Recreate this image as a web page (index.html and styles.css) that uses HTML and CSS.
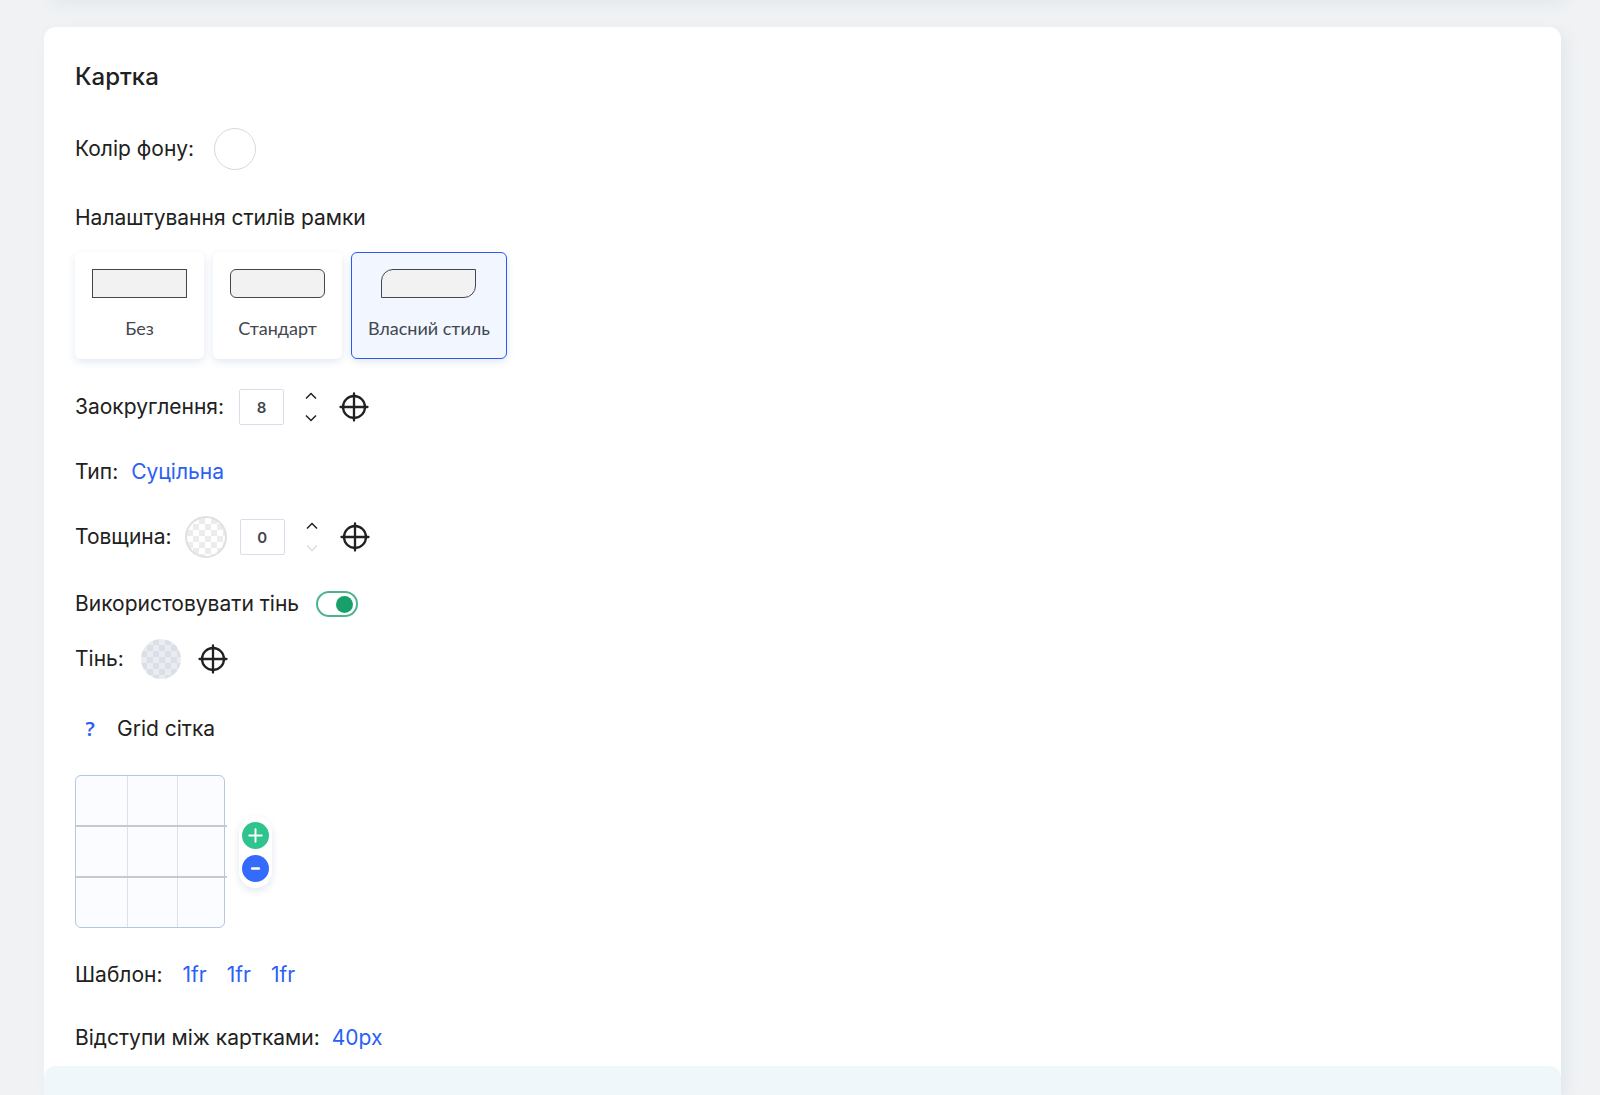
FILE: index.html
```html
<!DOCTYPE html>
<html lang="uk">
<head>
<meta charset="UTF-8">
<meta name="viewport" content="width=device-width, initial-scale=1.0">
<title>Картка</title>
<link rel="stylesheet" href="styles.css">
</head>
<body>

<svg class="sprite" aria-hidden="true">
    <symbol id="target" viewBox="0 0 30 30">
        <circle cx="15" cy="15" r="11" fill="none" stroke="currentColor" stroke-width="2.300"/>
        <path d="M15 1.500v27M1.500 15h27" fill="none" stroke="currentColor" stroke-width="2.300" stroke-linecap="round"/>
    </symbol>
    <symbol id="up" viewBox="0 0 12 8">
        <path d="M1 6.500 6 1.500l5 5" fill="none" stroke="currentColor" stroke-width="1.500"/>
    </symbol>
    <symbol id="down" viewBox="0 0 12 8">
        <path d="M1 1.500l5 5 5-5" fill="none" stroke="currentColor" stroke-width="1.500"/>
    </symbol>
</svg>

<main class="page">
    <div class="panel panel-prev"></div>

    <section class="panel">
        <form class="settings">
            <h1>Картка</h1>

            <div class="row row-bg">
                <label for="bgColor">Колір фону:</label>
                <button type="button" id="bgColor" class="swatch"></button>
            </div>

            <fieldset class="borders">
                <legend>Налаштування стилів рамки</legend>
                <div class="options">
                    <label class="option">
                        <input type="radio" name="border" value="none">
                        <span class="shape"></span>
                        <span>Без</span>
                    </label>
                    <label class="option">
                        <input type="radio" name="border" value="standard">
                        <span class="shape shape-round"></span>
                        <span>Стандарт</span>
                    </label>
                    <label class="option">
                        <input type="radio" name="border" value="custom" checked>
                        <span class="shape shape-custom"></span>
                        <span>Власний стиль</span>
                    </label>
                </div>
            </fieldset>

            <div class="row row-radius">
                <label for="radius">Заокруглення:</label>
                <div class="stepper">
                    <input type="text" id="radius" value="8">
                    <div class="arrows">
                        <button type="button" aria-label="Більше"><svg><use href="#up"/></svg></button>
                        <button type="button" aria-label="Менше"><svg><use href="#down"/></svg></button>
                    </div>
                    <button type="button" class="target" aria-label="Кути"><svg><use href="#target"/></svg></button>
                </div>
            </div>

            <div class="row row-type">
                <label for="borderType">Тип:</label>
                <button type="button" id="borderType" class="value">Суцільна</button>
            </div>

            <div class="row row-width">
                <label for="borderWidth">Товщина:</label>
                <button type="button" class="swatch swatch-empty" aria-label="Колір рамки"></button>
                <div class="stepper">
                    <input type="text" id="borderWidth" value="0">
                    <div class="arrows">
                        <button type="button" aria-label="Більше"><svg><use href="#up"/></svg></button>
                        <button type="button" aria-label="Менше" disabled><svg><use href="#down"/></svg></button>
                    </div>
                    <button type="button" class="target" aria-label="Сторони"><svg><use href="#target"/></svg></button>
                </div>
            </div>

            <div class="row row-toggle">
                <label for="useShadow">Використовувати тінь</label>
                <input type="checkbox" id="useShadow" class="toggle" checked>
            </div>

            <div class="row row-shadow">
                <label for="shadowColor">Тінь:</label>
                <button type="button" id="shadowColor" class="swatch swatch-shadow"></button>
                <button type="button" class="target" aria-label="Зміщення тіні"><svg><use href="#target"/></svg></button>
            </div>

            <div class="row row-grid">
                <button type="button" class="help" aria-label="Довідка">?</button>
                <span>Grid сітка</span>
            </div>

            <div class="grid-editor">
                <div class="grid-preview">
                    <div class="line"></div>
                    <div class="line"></div>
                    <div class="line"></div>
                </div>
                <div class="grid-buttons">
                    <button type="button" class="add" aria-label="Додати">
                        <svg viewBox="0 0 28 28"><path d="M14 7.500v13M7.500 14h13" stroke="#fff" stroke-width="2" stroke-linecap="round"/></svg>
                    </button>
                    <button type="button" class="remove" aria-label="Прибрати">
                        <svg viewBox="0 0 28 28"><path d="M10.500 14h7" stroke="#fff" stroke-width="2.500" stroke-linecap="round"/></svg>
                    </button>
                </div>
            </div>

            <div class="row row-template">
                <span>Шаблон:</span>
                <button type="button" class="value">1fr</button>
                <button type="button" class="value">1fr</button>
                <button type="button" class="value">1fr</button>
            </div>

            <div class="row row-gap">
                <label for="cardGap">Відступи між картками:</label>
                <button type="button" id="cardGap" class="value">40px</button>
            </div>
        </form>
        <div class="panel-next"></div>
    </section>
</main>

</body>
</html>
```
FILE: styles.css
```css
* {
    box-sizing: border-box;
}

body {
    margin: 0;
    background-color: #f0f2f4;
    color: #212121;
    font-family: Inter, Arial, sans-serif;
    font-size: 21px;
    line-height: 28px;
}

button {
    padding: 0;
    border: none;
    background: none;
    color: inherit;
    font: inherit;
    cursor: pointer;
}

svg {
    display: block;
    width: 100%;
    height: 100%;
}

.sprite {
    display: none;
}

.page {
    display: flex;
    flex-direction: column;
    gap: 27px;
    min-height: 100vh;
    padding: 0 39px 0 44px;
    overflow: hidden;
}

.panel {
    display: flex;
    flex-direction: column;
    flex: 1;
    border-radius: 12px;
    background-color: #fff;
    box-shadow: 6px 5px 14px #e3e9ed;
}

/* bottom edge of the panel above */
.panel-prev {
    flex: none;
    height: 40px;
    margin-top: -40px;
}

.panel-next {
    flex: 1;
    min-height: 29px;
    border-radius: 12px 12px 0 0;
    background-color: #eff7fb;
}

.settings {
    padding: 36px 31px 14px;
}

h1 {
    margin: 0;
    font-size: 24px;
    font-weight: 500;
    line-height: 28px;
}

.row {
    display: flex;
    align-items: center;
    margin-top: 33px;
}

.row-bg {
    gap: 20px;
    margin-top: 37px;
}

.swatch {
    width: 42px;
    height: 42px;
    border: 1px solid #d9d9d9;
    border-radius: 50%;
    background-color: #fff;
}

.swatch-empty {
    border: 2px solid #e0e0e0;
    background: repeating-conic-gradient(#fff 0 25%, #ececec 0 50%) 0 0 / 12px 12px;
}

.swatch-shadow {
    width: 40px;
    height: 40px;
    border: none;
    background: repeating-conic-gradient(#e9ecf2 0 25%, #dce0e6 0 50%) 0 0 / 12px 12px;
}

.borders {
    margin: 34px 0 0;
    padding: 0;
    border: none;
}

.borders legend {
    padding: 0;
}

.options {
    display: flex;
    flex-wrap: wrap;
    gap: 9px;
    margin-top: 20px;
}

.option {
    display: flex;
    flex-direction: column;
    align-items: center;
    gap: 16px;
    min-width: 129px;
    height: 107px;
    padding: 16px;
    border: 1px solid transparent;
    border-radius: 6px;
    box-shadow: 0 3px 8px #e2e9f1;
    color: #43474f;
    font-family: Lato, sans-serif;
    font-size: 18px;
    cursor: pointer;
}

.option input {
    position: absolute;
    opacity: 0;
}

.option:has(input:checked) {
    border-color: #2b59f6;
    background-color: #f1f6ff;
}

.shape {
    width: 95px;
    height: 31px;
    border: 1px solid #43474f;
    background-color: #f2f2f2;
}

.shape-round {
    border-radius: 6px;
}

.shape-custom {
    border-radius: 12px 0;
}

.row-radius {
    gap: 15px;
    margin-top: 30px;
}

.stepper {
    display: flex;
    align-items: center;
}

.stepper input {
    width: 45px;
    height: 36px;
    padding: 0;
    border: 1px solid #dcdcec;
    border-radius: 2px;
    color: #43474f;
    font-family: Inter, Arial, sans-serif;
    font-size: 15px;
    font-weight: 600;
    text-align: center;
}

.arrows {
    display: flex;
    flex-direction: column;
    gap: 14px;
    margin: 0 22px 0 21px;
}

.arrows button {
    width: 12px;
    height: 8px;
}

.arrows button:disabled {
    color: #dedede;
}

.target {
    width: 30px;
    height: 30px;
}

.value {
    color: #2b60f6;
}

.row-type {
    gap: 13px;
}

.row-width {
    gap: 13px;
    margin-top: 30px;
}

.row-toggle {
    gap: 17px;
    margin-top: 32px;
}

.toggle {
    appearance: none;
    display: flex;
    align-items: center;
    width: 42px;
    height: 26px;
    margin: 0;
    padding: 0 3px;
    border: 2px solid #4cb58c;
    border-radius: 13px;
    cursor: pointer;
}

.toggle::before {
    content: "";
    width: 17px;
    height: 17px;
    border-radius: 50%;
    background-color: #18a06b;
}

.toggle:checked {
    justify-content: flex-end;
}

.row-shadow {
    gap: 17px;
    margin-top: 21px;
}

.row-grid {
    gap: 12px;
    margin-top: 36px;
}

.help {
    width: 30px;
    color: #2b60f6;
    font-family: "Noto Sans", sans-serif;
    font-size: 20px;
    font-weight: 600;
}

.grid-editor {
    display: flex;
    align-items: center;
    gap: 14px;
    margin-top: 32px;
}

.grid-preview {
    display: grid;
    grid-template-rows: 49px 51px 1fr;
    width: 150px;
    height: 153px;
    border: 1px solid #b5c6de;
    border-radius: 6px;
    background: linear-gradient(90deg, transparent 51px, #dfe1e5 51px 52px, transparent 52px 101px, #dfe1e5 101px 102px, transparent 102px) #fafcff;
}

.line {
    width: 151px;
}

.line + .line {
    border-top: 2px solid #c8c9ca;
}

.grid-buttons {
    display: flex;
    flex-direction: column;
    gap: 6px;
    padding: 6px 3px;
    border-radius: 17px;
    box-shadow: 0 3px 8px #e3e7f0;
}

.grid-buttons button {
    width: 27px;
    height: 27px;
    border-radius: 50%;
}

.add {
    background-color: #2fc48d;
}

.remove {
    background-color: #356bfd;
}

.row-template {
    gap: 20px;
}

.row-gap {
    gap: 12px;
    margin-top: 35px;
}
```
